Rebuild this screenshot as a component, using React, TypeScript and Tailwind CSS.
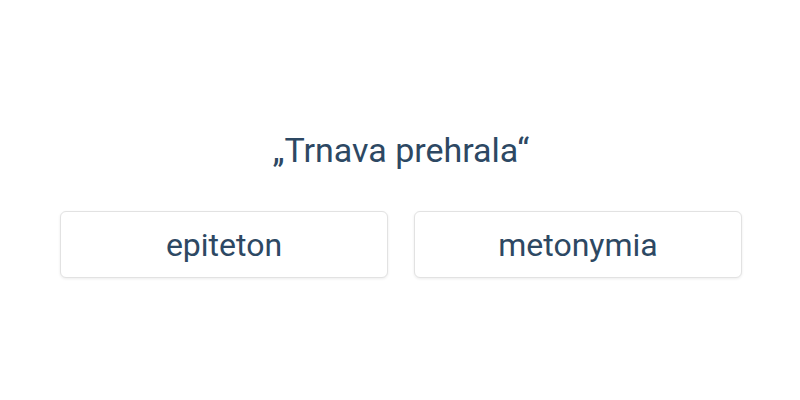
export default function App() {
  const options = ["epiteton", "metonymia"];
  return (
    <div
      className="w-[800px] h-[400px] bg-white text-[#2d4863] flex flex-col pt-[130px] pl-[60px] pr-[58px]"
      style={{ fontFamily: "Roboto, 'Liberation Sans', sans-serif" }}
    >
      <h1 className="text-[34px] leading-[40px] text-center font-normal">„Trnava prehrala“</h1>
      <div className="grid grid-cols-2 gap-[26px] mt-[41px]">
        {options.map((o) => (
          <button
            key={o}
            className="h-[67px] bg-white border border-[#e2e2e2] rounded-[6px] shadow-[0_1px_3px_rgba(0,0,0,0.08)] text-[32px] text-[#2d4863]"
          >
            {o}
          </button>
        ))}
      </div>
    </div>
  );
}
